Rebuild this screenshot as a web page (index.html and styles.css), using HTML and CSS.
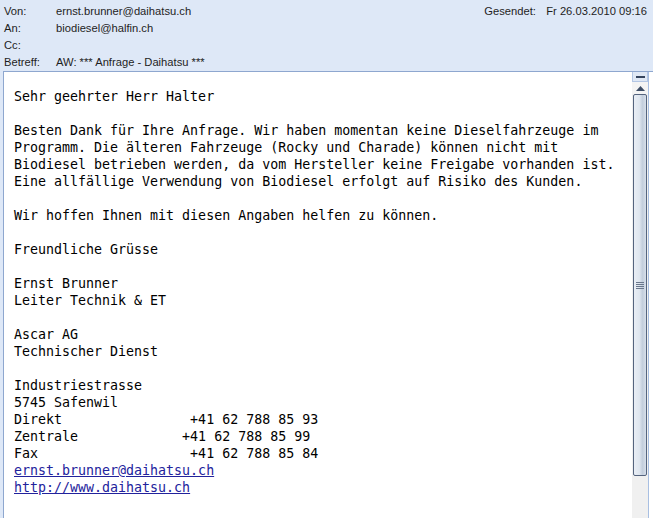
FILE: index.html
```html
<!DOCTYPE html>
<html lang="de">
<head>
  <meta charset="UTF-8">
  <title>AW: *** Anfrage - Daihatsu ***</title>
  <link rel="stylesheet" href="styles.css">
</head>
<body>

  <div class="mail-header">
    <div class="row">
      <span class="label">Von:</span>
      <span class="value">ernst.brunner@daihatsu.ch</span>
      <span class="sent">
        <span class="sent-label">Gesendet:</span>
        <span>Fr 26.03.2010 09:16</span>
      </span>
    </div>
    <div class="row">
      <span class="label">An:</span>
      <span class="value">biodiesel@halfin.ch</span>
    </div>
    <div class="row">
      <span class="label">Cc:</span>
      <span class="value"></span>
    </div>
    <div class="row">
      <span class="label">Betreff:</span>
      <span class="value">AW: *** Anfrage - Daihatsu ***</span>
    </div>
  </div>

  <div class="message">
    <pre class="mail-body">Sehr geehrter Herr Halter

Besten Dank für Ihre Anfrage. Wir haben momentan keine Dieselfahrzeuge im
Programm. Die älteren Fahrzeuge (Rocky und Charade) können nicht mit
Biodiesel betrieben werden, da vom Hersteller keine Freigabe vorhanden ist.
Eine allfällige Verwendung von Biodiesel erfolgt auf Risiko des Kunden.

Wir hoffen Ihnen mit diesen Angaben helfen zu können.

Freundliche Grüsse

Ernst Brunner
Leiter Technik &amp; ET

Ascar AG
Technischer Dienst

Industriestrasse
5745 Safenwil
Direkt                +41 62 788 85 93
Zentrale             +41 62 788 85 99
Fax                   +41 62 788 85 84
<a href="#">ernst.brunner@daihatsu.ch</a>
<a href="#">http://www.daihatsu.ch</a></pre>

    <div class="scrollbar">
      <div class="sb-top"><span class="sb-dash"></span></div>
      <div class="sb-arrow">
        <svg width="9" height="5" viewBox="0 0 9 5"><polygon points="4.5,0 9,5 0,5" fill="#3d4d66"/></svg>
      </div>
      <div class="sb-thumb">
        <span class="grip"></span>
      </div>
      <div class="sb-track"></div>
    </div>
  </div>

</body>
</html>
```

FILE: styles.css
```css
body {
  margin: 0;
  height: 518px;
  overflow: hidden;
  background-color: #dee8f7;
  font-family: "Liberation Sans", Arial, sans-serif;
  font-size: 11.2px;
  color: #1e1e1e;
  display: flex;
  flex-direction: column;
}

.mail-header {
  padding: 2px 6px 0 4px;
  height: 71px;
  box-sizing: border-box;
}

.row {
  display: flex;
  height: 17px;
  line-height: 17px;
}

.row:first-child {
  margin-top: 1px;
}

.label {
  width: 52px;
  flex-shrink: 0;
}

.value {
  flex: 1;
}

.sent {
  display: flex;
}

.sent-label {
  width: 62px;
}

.message {
  flex: 1;
  display: flex;
  margin-left: 3px;
  background-color: #ffffff;
  border-top: 1px solid #8ea7cf;
  border-left: 1px solid #8ea7cf;
  min-height: 0;
}

.mail-body {
  flex: 1;
  margin: 0;
  padding: 16px 10px 0;
  font-family: "DejaVu Sans Mono", "Liberation Mono", monospace;
  font-size: 13.3px;
  line-height: 17px;
  color: #000;
  overflow: hidden;
}

.mail-body a {
  color: #22229c;
}

.scrollbar {
  width: 16px;
  margin-right: 4px;
  border-right: 1px solid #a8bfe2;
  display: flex;
  flex-direction: column;
  background-color: #f0f0f0;
}

.sb-top {
  height: 9px;
  background-color: #dfe8f5;
  border: 1px solid #b3c6e4;
  border-top: none;
  display: flex;
  align-items: center;
  justify-content: center;
}

.sb-dash {
  width: 9px;
  height: 2px;
  background-color: #34445e;
}

.sb-arrow {
  height: 12px;
  background-color: #f4f4f4;
  display: flex;
  align-items: center;
  justify-content: center;
}

.sb-thumb {
  height: 380px;
  margin: 0 1px;
  border: 1px solid #55647e;
  border-radius: 2px;
  background: linear-gradient(to right, #e9eef5 0%, #dfe6ef 45%, #c3cedd 70%, #d7dfea 100%);
  display: flex;
  align-items: center;
  justify-content: center;
}

.grip {
  width: 8px;
  height: 7px;
  background: repeating-linear-gradient(to bottom, #6a778c 0 1px, transparent 1px 2px);
}

.sb-track {
  flex: 1;
  background-color: #f0f0f0;
}
```
